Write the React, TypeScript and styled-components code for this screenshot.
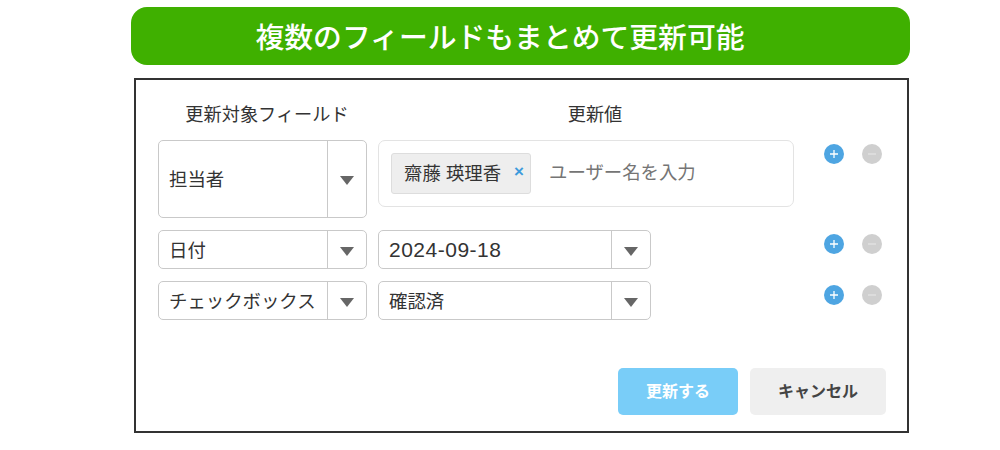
import styled, { createGlobalStyle } from "styled-components";

const GlobalStyle = createGlobalStyle`
    html, body {
        margin: 0;
        background: #fff;
    }
    body {
        font-family: "Liberation Sans", "Noto Sans CJK JP", sans-serif;
        color: #333;
    }
`;

const PlusIcon = () => (
    <svg width="10" height="10" viewBox="0 0 10 10">
        <path d="M5 1v8M1 5h8" stroke="#fff" strokeWidth="1.3" />
    </svg>
);

const MinusIcon = () => (
    <svg width="10" height="10" viewBox="0 0 10 10">
        <path d="M1 5h8" stroke="#e4e4e4" strokeWidth="1.3" />
    </svg>
);

const Actions = () => (
    <ActionBox>
        <RoundButton color="#4ea5e2">
            <PlusIcon />
        </RoundButton>
        <RoundButton color="#cfcfcf">
            <MinusIcon />
        </RoundButton>
    </ActionBox>
);

const Select = ({ value, width, tall, latin }: { value: string; width: number; tall?: boolean; latin?: boolean }) => (
    <SelectBox $width={width} $tall={tall}>
        <SelectText $latin={latin}>{value}</SelectText>
        <ArrowBox>
            <Arrow />
        </ArrowBox>
    </SelectBox>
);

const App = () => {
    return (
        <Page>
            <GlobalStyle />
            <Banner>複数のフィールドもまとめて更新可能</Banner>
            <Panel>
                <HeadRow>
                    <FieldHead>更新対象フィールド</FieldHead>
                    <ValueHead>更新値</ValueHead>
                </HeadRow>

                <UserRow>
                    <Select value="担当者" width={209} tall />
                    <TagInput>
                        <Tag>
                            <TagName>齋藤 瑛理香</TagName>
                            <TagClose>×</TagClose>
                        </Tag>
                        <Placeholder>ユーザー名を入力</Placeholder>
                    </TagInput>
                    <Actions />
                </UserRow>

                <Row>
                    <Select value="日付" width={209} />
                    <ValueCell>
                        <Select value="2024-09-18" width={273} latin />
                    </ValueCell>
                    <Actions />
                </Row>

                <Row>
                    <Select value="チェックボックス" width={209} />
                    <ValueCell>
                        <Select value="確認済" width={273} />
                    </ValueCell>
                    <Actions />
                </Row>

                <Footer>
                    <SubmitButton>更新する</SubmitButton>
                    <CancelButton>キャンセル</CancelButton>
                </Footer>
            </Panel>
        </Page>
    );
};

const Page = styled.div`
    width: 1000px;
    height: 450px;
    padding: 7px 0 0 131px;
    box-sizing: border-box;
    overflow: hidden;
`;
const Banner = styled.h1`
    width: 779px;
    height: 58px;
    margin: 0;
    padding-right: 41px;
    box-sizing: border-box;
    border-radius: 16px;
    background-color: #3fb000;
    color: #fff;
    font-size: 28.8px;
    font-weight: 500;
    line-height: 62px;
    text-align: center;
`;
const Panel = styled.section`
    width: 775px;
    height: 355px;
    margin: 13px 0 0 3px;
    padding: 0 21px 0 22px;
    box-sizing: border-box;
    border: 2px solid #333;
    display: flex;
    flex-direction: column;
`;
const HeadRow = styled.div`
    height: 60px;
    display: flex;
    align-items: center;
    font-size: 18.2px;
    padding-top: 6px;
    box-sizing: border-box;
`;
const FieldHead = styled.div`
    width: 218px;
    text-align: center;
`;
const ValueHead = styled.div`
    width: 438px;
    text-align: center;
`;
const Row = styled.div`
    height: 39px;
    margin-bottom: 12px;
    display: flex;
    gap: 11px;
`;
const UserRow = styled(Row)`
    height: 78px;
`;
const SelectBox = styled.div<{ $width: number; $tall?: boolean }>`
    width: ${(props) => props.$width}px;
    height: ${(props) => (props.$tall ? 78 : 39)}px;
    flex-shrink: 0;
    box-sizing: border-box;
    border: 1px solid #c9c9c9;
    border-radius: 5px;
    display: flex;
    align-items: center;
    font-size: 18.4px;
`;
const SelectText = styled.span<{ $latin?: boolean }>`
    flex: 1;
    padding-left: 10px;
    padding-bottom: ${(props) => (props.$latin ? "0" : "2px")};
    white-space: nowrap;
    font-size: ${(props) => (props.$latin ? "21px" : "inherit")};
    letter-spacing: ${(props) => (props.$latin ? "0.5px" : "0")};
`;
const ArrowBox = styled.div`
    width: 38px;
    height: 100%;
    border-left: 1px solid #c9c9c9;
    display: flex;
    align-items: center;
    justify-content: center;
`;
const Arrow = styled.i`
    width: 0;
    height: 0;
    margin-top: 3px;
    border-left: 7px solid transparent;
    border-right: 7px solid transparent;
    border-top: 9px solid #666;
`;
const ValueCell = styled.div`
    width: 416px;
    flex-shrink: 0;
`;
const TagInput = styled.div`
    width: 416px;
    height: 67px;
    flex-shrink: 0;
    padding: 12px;
    box-sizing: border-box;
    border: 1px solid #e3e3e3;
    border-radius: 7px;
    display: flex;
    align-items: flex-start;
`;
const Tag = styled.div`
    width: 140px;
    height: 41px;
    padding: 0 0 3px 12px;
    box-sizing: border-box;
    border: 1px solid #ddd;
    border-radius: 3px;
    background-color: #eee;
    display: flex;
    align-items: center;
    font-size: 18.4px;
    white-space: nowrap;
`;
const TagName = styled.span``;
const TagClose = styled.span`
    margin-left: 13px;
    color: #3d9bdc;
    font-size: 17px;
    font-weight: 700;
`;
const Placeholder = styled.span`
    margin-left: 18px;
    height: 39px;
    line-height: 39px;
    color: #757575;
    font-size: 18.4px;
`;
const ActionBox = styled.div`
    margin-left: 19px;
    padding-top: 4px;
    display: flex;
    gap: 18px;
`;
const RoundButton = styled.span<{ color: string }>`
    width: 20px;
    height: 20px;
    border-radius: 50%;
    background-color: ${(props) => props.color};
    display: flex;
    align-items: center;
    justify-content: center;
`;
const Footer = styled.div`
    margin-top: 36px;
    display: flex;
    justify-content: flex-end;
    gap: 12px;
`;
const SubmitButton = styled.div`
    width: 120px;
    height: 47px;
    border-radius: 5px;
    background-color: #79cdf8;
    color: #fff;
    font-size: 16px;
    font-weight: 700;
    line-height: 47px;
    text-align: center;
`;
const CancelButton = styled(SubmitButton)`
    width: 136px;
    background-color: #efefef;
    color: #444;
`;

export default App;
